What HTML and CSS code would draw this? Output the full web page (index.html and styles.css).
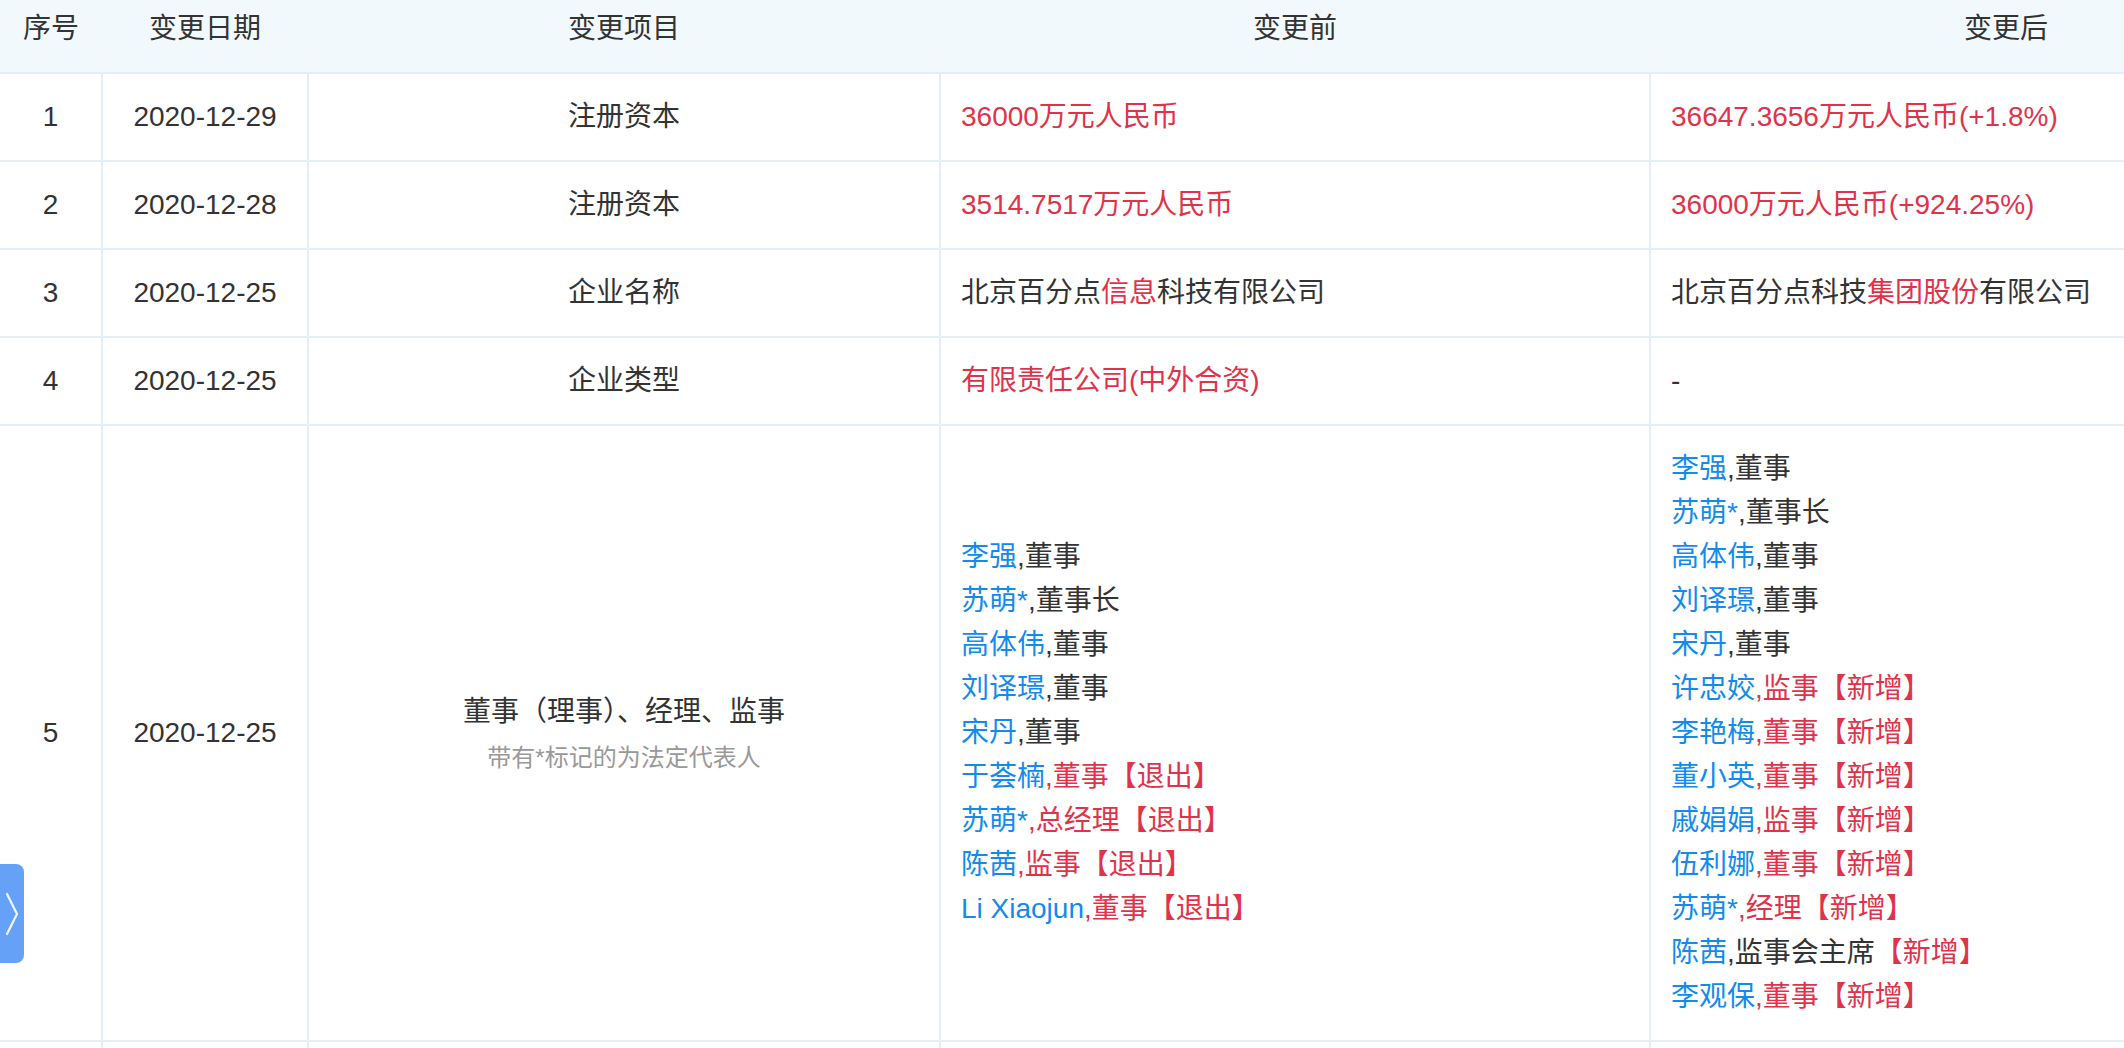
FILE: index.html
```html
<!DOCTYPE html>
<html lang="zh-CN">
<head>
<meta charset="utf-8">
<title>变更记录</title>
<link rel="stylesheet" href="styles.css">
</head>
<body>
<div class="viewport">
  <table class="changes">
    <colgroup>
      <col class="c-no">
      <col class="c-date">
      <col class="c-item">
      <col class="c-before">
      <col class="c-after">
    </colgroup>
    <thead>
      <tr>
        <th>序号</th>
        <th>变更日期</th>
        <th>变更项目</th>
        <th>变更前</th>
        <th>变更后</th>
      </tr>
    </thead>
    <tbody>
      <tr>
        <td class="center">1</td>
        <td class="center">2020-12-29</td>
        <td class="center">注册资本</td>
        <td class="left red">36000万元人民币</td>
        <td class="left red">36647.3656万元人民币(+1.8%)</td>
      </tr>
      <tr>
        <td class="center">2</td>
        <td class="center">2020-12-28</td>
        <td class="center">注册资本</td>
        <td class="left red">3514.7517万元人民币</td>
        <td class="left red">36000万元人民币(+924.25%)</td>
      </tr>
      <tr>
        <td class="center">3</td>
        <td class="center">2020-12-25</td>
        <td class="center">企业名称</td>
        <td class="left">北京百分点<span class="red">信息</span>科技有限公司</td>
        <td class="left">北京百分点科技<span class="red">集团股份</span>有限公司</td>
      </tr>
      <tr>
        <td class="center">4</td>
        <td class="center">2020-12-25</td>
        <td class="center">企业类型</td>
        <td class="left red">有限责任公司(中外合资)</td>
        <td class="left">-</td>
      </tr>
      <tr>
        <td class="center">5</td>
        <td class="center">2020-12-25</td>
        <td class="center">
          <div>董事（理事）、经理、监事</div>
          <div class="note">带有*标记的为法定代表人</div>
        </td>
        <td class="left">
          <div><span class="blue">李强</span>,董事</div>
          <div><span class="blue">苏萌*</span>,董事长</div>
          <div><span class="blue">高体伟</span>,董事</div>
          <div><span class="blue">刘译璟</span>,董事</div>
          <div><span class="blue">宋丹</span>,董事</div>
          <div><span class="blue">于荟楠</span><span class="red">,董事【退出】</span></div>
          <div><span class="blue">苏萌*</span><span class="red">,总经理【退出】</span></div>
          <div><span class="blue">陈茜</span><span class="red">,监事【退出】</span></div>
          <div><span class="blue">Li Xiaojun</span><span class="red">,董事【退出】</span></div>
        </td>
        <td class="left">
          <div><span class="blue">李强</span>,董事</div>
          <div><span class="blue">苏萌*</span>,董事长</div>
          <div><span class="blue">高体伟</span>,董事</div>
          <div><span class="blue">刘译璟</span>,董事</div>
          <div><span class="blue">宋丹</span>,董事</div>
          <div><span class="blue">许忠姣</span><span class="red">,监事【新增】</span></div>
          <div><span class="blue">李艳梅</span><span class="red">,董事【新增】</span></div>
          <div><span class="blue">董小英</span><span class="red">,董事【新增】</span></div>
          <div><span class="blue">戚娟娟</span><span class="red">,监事【新增】</span></div>
          <div><span class="blue">伍利娜</span><span class="red">,董事【新增】</span></div>
          <div><span class="blue">苏萌*</span><span class="red">,经理【新增】</span></div>
          <div><span class="blue">陈茜</span>,监事会主席<span class="red">【新增】</span></div>
          <div><span class="blue">李观保</span><span class="red">,董事【新增】</span></div>
        </td>
      </tr>
      <tr class="next">
        <td></td><td></td><td></td><td></td><td></td>
      </tr>
    </tbody>
  </table>
</div>
<button class="side-tab" type="button" aria-label="展开">
  <svg width="14" height="46" viewBox="0 0 14 46" fill="none">
    <path d="M2 3 L12 23 L2 43" stroke="#ffffff" stroke-width="2.2" stroke-linecap="round" stroke-linejoin="round" opacity="0.9"/>
  </svg>
</button>
</body>
</html>
```

FILE: styles.css
```css
html, body {
  margin: 0;
  padding: 0;
  background: #ffffff;
}

body {
  font-family: "Liberation Sans", "Noto Sans CJK SC", sans-serif;
  font-size: 28px;
  line-height: 44px;
  color: #333333;
  overflow: hidden;
}

.viewport {
  width: 2124px;
  height: 1048px;
  overflow: hidden;
}

.changes {
  width: 2362px;
  table-layout: fixed;
  border-collapse: collapse;
  border-spacing: 0;
}

.c-no { width: 102px; }
.c-date { width: 206px; }
.c-item { width: 632px; }
.c-before { width: 710px; }
.c-after { width: 712px; }

.changes th {
  background: #f2f9fc;
  font-weight: normal;
  text-align: center;
  padding: 7px 0 21px;
  border-bottom: 2px solid #e4eef6;
  color: #333333;
}

.changes td {
  padding: 21px 0;
  border: 2px solid #e4eef6;
  vertical-align: middle;
}

.changes tr td:first-child {
  border-left: none;
}

.changes td.center {
  text-align: center;
}

.changes td.left {
  text-align: left;
  padding-left: 20px;
  padding-right: 20px;
}

.changes tr.next td {
  height: 40px;
  padding: 0;
}

.note {
  font-size: 24px;
  line-height: 36px;
  margin-top: 6px;
  color: #999999;
}

.red {
  color: #e0334a;
}

.blue {
  color: #128bed;
}

.side-tab {
  position: fixed;
  left: 0;
  top: 864px;
  width: 24px;
  height: 99px;
  padding: 0;
  border: none;
  border-radius: 0 8px 8px 0;
  background: #66a1f8;
  display: flex;
  align-items: center;
  justify-content: center;
  cursor: pointer;
}
```
